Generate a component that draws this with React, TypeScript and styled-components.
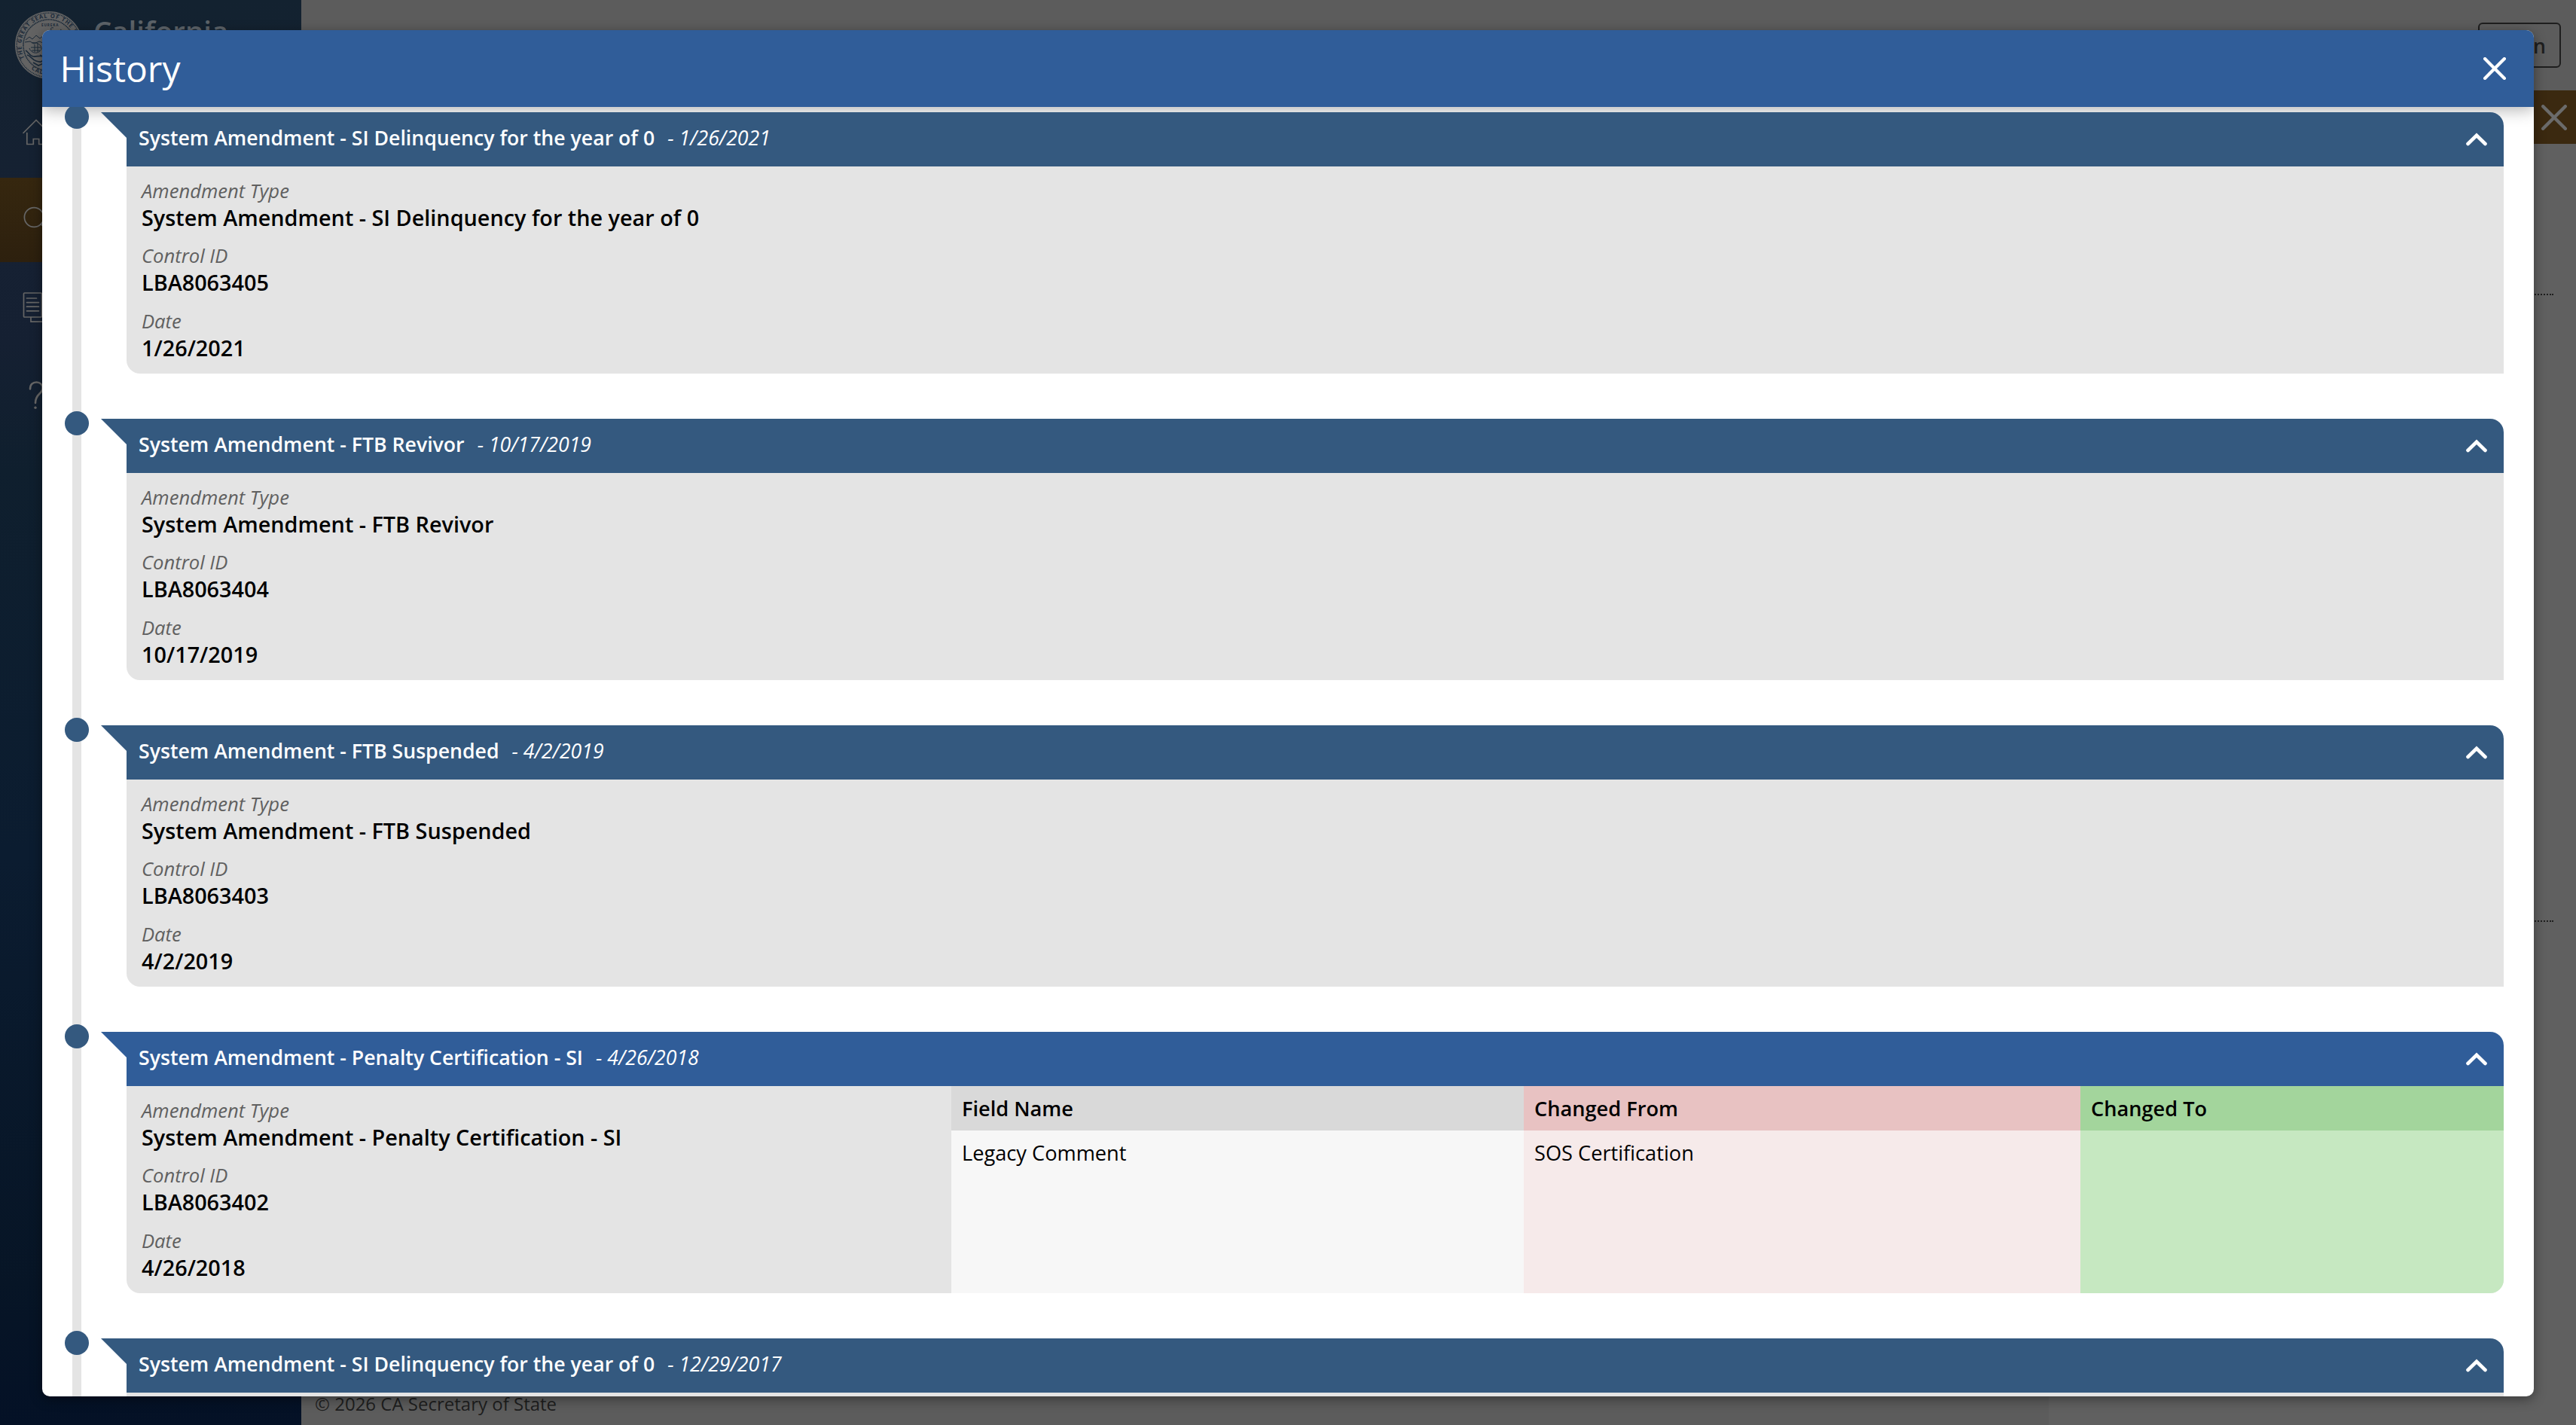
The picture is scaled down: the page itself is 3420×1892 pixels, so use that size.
import React, { FC } from 'react';
import styled, { createGlobalStyle } from 'styled-components';

const GlobalStyle = createGlobalStyle`
  * {
    box-sizing: border-box;
  }

  body {
    margin: 0;
    overflow: hidden;
    font-family: 'Open Sans', 'Noto Sans', sans-serif;
    color: #000;
  }
`;

/* page behind the dialog, colors are already dimmed */

const Page = styled.div`
  display: flex;
  width: 3420px;
  height: 1892px;
  background: #606060;
  overflow: hidden;
`;

const Sidebar = styled.aside`
  flex: none;
  width: 400px;
  background: linear-gradient(180deg, #132230 0%, #162133 17%, #152032 24%, #0f1f2e 33%, #0b1c30 60%, #071526 90%, #041126 100%);
`;

const Brand = styled.div`
  display: flex;
  align-items: flex-start;
  height: 120px;
  padding: 15px 0 0 20px;
`;

const BrandName = styled.div`
  margin-left: 14px;
  font-size: 38.4px;
  font-weight: 600;
  line-height: 52px;
  color: #5c6268;
`;

const Nav = styled.nav`
  display: flex;
  flex-direction: column;
  gap: 4px;
`;

const NavItem = styled.div<{ $active?: boolean }>`
  display: flex;
  align-items: center;
  height: 112px;
  padding-left: 28px;
  color: #666;
  background: ${({ $active }) => $active ? 'linear-gradient(180deg, #36270f, #2d200e)' : 'none'};
`;

const Main = styled.main`
  display: flex;
  flex: 1;
  flex-direction: column;
`;

const TopBar = styled.div`
  display: flex;
  flex: none;
  align-items: center;
  justify-content: flex-end;
  height: 120px;
  padding-right: 20px;
  background: #5c5c5c;
`;

const LoginButton = styled.button`
  width: 110px;
  height: 60px;
  padding: 0;
  border: 2px solid #1e1e1e;
  border-radius: 6px;
  background: none;
  font-family: inherit;
  font-size: 26.67px;
  font-weight: 600;
  color: #1e1e1e;
`;

const Banner = styled.div`
  display: flex;
  flex: none;
  align-items: center;
  justify-content: flex-end;
  height: 71px;
  padding-right: 12px;
  background: #3b2910;
  color: #6b6b6b;
`;

const Content = styled.div`
  flex: 1;
  min-height: 0;
  padding: 199px 30px 0;
`;

const Divider = styled.div`
  border-top: 2px dotted #1e1e1e;

  & + & {
    margin-top: 830px;
  }
`;

const Footer = styled.footer`
  flex: none;
  width: 2320px;
  height: 56px;
  padding-left: 18px;
  background: #5c5c5c;
  font-size: 24px;
  line-height: 56px;
  color: #1e1e1e;
`;

/* dialog */

const Dialog = styled.section`
  position: absolute;
  top: 40px;
  left: 56px;
  display: flex;
  flex-direction: column;
  width: 3308px;
  height: 1814px;
  border-radius: 10px;
  background: #fff;
  box-shadow: 0 4px 16px rgba(0, 0, 0, 0.4);
`;

const DialogClip = styled.div`
  display: flex;
  flex: 1;
  flex-direction: column;
  min-height: 0;
  border-radius: 10px;
  overflow: hidden;
`;

const DialogHeader = styled.header`
  display: flex;
  flex: none;
  align-items: center;
  justify-content: space-between;
  height: 102px;
  padding: 0 37.5px 1px 23.5px;
  background: #305d99;
  box-shadow: 0 4px 20px rgba(0, 0, 0, 0.3);
  color: #fff;
`;

const DialogTitle = styled.h1`
  margin: 0;
  font-size: 48px;
  font-weight: 400;
  line-height: 66px;
`;

const DialogBody = styled.div`
  position: relative;
  flex: 1;
  min-height: 0;
  padding: 7px 40px 0 0;
  overflow: hidden;
`;

const Entry = styled.article`
  display: flex;
  height: 407px;
`;

const Rail = styled.div`
  display: flex;
  flex: none;
  flex-direction: column;
  align-items: center;
  width: 32px;
  margin: 0 50px 0 30px;
`;

const Dot = styled.span`
  position: relative;
  z-index: 1;
  flex: none;
  width: 32px;
  height: 32px;
  margin-top: -10px;
  border-radius: 50%;
  background: #34597f;
`;

const Line = styled.span`
  flex: 1;
  width: 12px;
  margin: -3px 0 -12px;
  background: #e4e4e4;
`;

const Card = styled.div`
  flex: 1;
`;

const CardHeader = styled.div<{ $highlight?: boolean }>`
  position: relative;
  display: flex;
  align-items: center;
  height: 72px;
  padding: 0 22px 0 16px;
  border-top-right-radius: 18px;
  background: ${({ $highlight }) => $highlight ? '#305d99' : '#34597f'};
  color: #fff;

  &::before {
    content: '';
    position: absolute;
    top: 0;
    left: -34px;
    width: 34px;
    height: 34px;
    background: inherit;
    clip-path: polygon(0 0, 100% 0, 100% 100%);
  }
`;

const CardTitle = styled.div`
  flex: 1;
  padding-bottom: 5px;
  font-size: 26.67px;
  font-weight: 600;
  line-height: 36px;
`;

const CardDate = styled.em`
  margin-left: 17px;
  font-weight: 400;
`;

const CardBody = styled.div<{ $rounded: boolean }>`
  display: flex;
  height: 275px;
  border-radius: ${({ $rounded }) => $rounded ? '0 0 18px 18px' : '0 0 0 18px'};
  background: #e4e4e4;
  overflow: hidden;
`;

const Fields = styled.div`
  flex: none;
  width: 1095px;
  padding: 15.6px 20px 0;
`;

const Field = styled.div`
  margin-bottom: 16.5px;
`;

const FieldLabel = styled.div`
  font-size: 25.6px;
  font-style: italic;
  line-height: 34px;
  color: #606060;
`;

const FieldValue = styled.div`
  font-size: 28.8px;
  font-weight: 600;
  line-height: 36px;
`;

const Changes = styled.div`
  display: grid;
  flex: 1;
  grid-template-columns: 760px 739px 1fr;
  grid-template-rows: 59px 1fr;
`;

const Cell = styled.div<{ $color: string; $head?: boolean }>`
  padding-left: 14px;
  background: ${({ $color }) => $color};
  font-size: 27.2px;
  font-weight: ${({ $head }) => $head ? 600 : 400};
  line-height: 59px;
`;

interface CrossProps {
  size: number;
  stroke: number;
}

const Cross: FC<CrossProps> = ({ size, stroke }) => {
  const a = stroke / 2;
  const b = size - a;

  return (
    <svg width={size} height={size} fill='none' stroke='currentColor' strokeWidth={stroke} strokeLinecap='round'>
      <path d={`M${a} ${a}L${b} ${b}M${b} ${a}L${a} ${b}`} />
    </svg>
  );
};

const Chevron: FC = () => (
  <svg width='28' height='18' fill='none' stroke='currentColor' strokeWidth='4.6' strokeLinecap='round'>
    <path d='M2.5 15L14 3.8L25.5 15' />
  </svg>
);

const Seal: FC = () => (
  <svg width='90' height='90' viewBox='0 0 90 90' fill='none' stroke='#1b2a39' strokeWidth='1'>
    <defs>
      <path id='seal-ring' d='M12.5 62A36.6 36.6 0 1 1 77.5 62' />
      <path id='seal-base' d='M19 75A41 41 0 0 0 71 75' />
    </defs>
    <circle cx='45' cy='45' r='45' fill='#636363' stroke='none' />
    <circle cx='45' cy='45' r='42.8' strokeDasharray='1.2 1' strokeWidth='1.4' />
    <circle cx='45' cy='45' r='34' strokeDasharray='1.5 0.7' strokeWidth='1.6' />
    <g fill='#1b2a39' stroke='none' fontSize='7.6' fontWeight='700' letterSpacing='0.9'>
      <text><textPath href='#seal-ring'>THE GREAT SEAL OF THE STATE OF</textPath></text>
      <text><textPath href='#seal-base' startOffset='3'>CALIFORNIA</textPath></text>
      <text x='35' y='20' fontSize='4.6'>EUREKA</text>
    </g>
    <path d='M14 38l5-4 4 3 5-5 5 4 5-4 4 5M13 41l7-1 5 3 7-3 8 3 6-2' />
    <path d='M22 42c4-1 9 0 12 4s-1 8-5 9-9-2-10-6M26 44v10M30 43v11M21 48h13M22 52h11' />
    <path d='M14 52c4 2 5 7 10 8s10-3 14 1M16 58c5 1 6 6 12 8s7 1 10-1M24 68l7 4 7-3M40 40v14M36 46h9M33 58l9 5' strokeWidth='1.7' />
    <path d='M49 26c-3-3-1-5 2-4M46 33c2-3 6-3 8 0M60 24l6 4' />
  </svg>
);

const HomeIcon: FC = () => (
  <svg width='40' height='40' fill='none' stroke='currentColor' strokeWidth='1.7' strokeLinecap='round'>
    <path d='M3 20.5L20 3.5L37 20.5M7.8 20.5V35.5H16.3V28.5H23.7V35.5H32.2V20.5' />
  </svg>
);

const SearchIcon: FC = () => (
  <svg width='40' height='40' fill='none' stroke='currentColor' strokeWidth='1.7' strokeLinecap='round'>
    <circle cx='17.2' cy='16.5' r='12.8' />
    <path d='M26.3 25.5L36.5 35.7' />
  </svg>
);

const DocumentIcon: FC = () => (
  <svg width='40' height='44' fill='none' stroke='currentColor' strokeWidth='1.7' strokeLinecap='round'>
    <rect x='3.5' y='3' width='24' height='32' rx='1' />
    <path d='M13 35.5V41.2H37V9H28M7.5 10H20.5M7.5 15.6H23.5M7.5 21.2H23.5M7.5 26.8H23.5' />
  </svg>
);

const HelpIcon: FC = () => (
  <svg width='40' height='40' fill='none' stroke='currentColor' strokeWidth='2.6' strokeLinecap='round'>
    <path d='M12 12.5C12 6.5 15.5 3.5 20.5 3.5C25.5 3.5 28.5 7 28.5 11.5C28.5 19 19 18.5 19 31' />
    <circle cx='19' cy='37.3' r='1.7' fill='currentColor' stroke='none' />
  </svg>
);

interface Change {
  field: string;
  from: string;
  to: string;
}

interface Amendment {
  type: string;
  controlId: string;
  date: string;
  changes?: Change[];
}

const amendments: Amendment[] = [
  { type: 'System Amendment - SI Delinquency for the year of 0', controlId: 'LBA8063405', date: '1/26/2021' },
  { type: 'System Amendment - FTB Revivor', controlId: 'LBA8063404', date: '10/17/2019' },
  { type: 'System Amendment - FTB Suspended', controlId: 'LBA8063403', date: '4/2/2019' },
  {
    type: 'System Amendment - Penalty Certification - SI',
    controlId: 'LBA8063402',
    date: '4/26/2018',
    changes: [{ field: 'Legacy Comment', from: 'SOS Certification', to: '' }]
  },
  { type: 'System Amendment - SI Delinquency for the year of 0', controlId: '', date: '12/29/2017' }
];

const HistoryEntry: FC<Amendment> = ({ type, controlId, date, changes }) => {
  return (
    <Entry>
      <Rail>
        <Dot />
        <Line />
      </Rail>
      <Card>
        <CardHeader $highlight={!!changes}>
          <CardTitle>
            {type}
            <CardDate>- {date}</CardDate>
          </CardTitle>
          <Chevron />
        </CardHeader>
        <CardBody $rounded={!!changes}>
          {controlId && (
            <Fields>
              <Field>
                <FieldLabel>Amendment Type</FieldLabel>
                <FieldValue>{type}</FieldValue>
              </Field>
              <Field>
                <FieldLabel>Control ID</FieldLabel>
                <FieldValue>{controlId}</FieldValue>
              </Field>
              <Field>
                <FieldLabel>Date</FieldLabel>
                <FieldValue>{date}</FieldValue>
              </Field>
            </Fields>
          )}
          {changes && (
            <Changes>
              <Cell $head $color='#d9d9d9'>Field Name</Cell>
              <Cell $head $color='#e8c2c2'>Changed From</Cell>
              <Cell $head $color='#a3d59c'>Changed To</Cell>
              {changes.map(({ field, from, to }) => (
                <React.Fragment key={field}>
                  <Cell $color='#f7f7f7'>{field}</Cell>
                  <Cell $color='#f6eaea'>{from}</Cell>
                  <Cell $color='#c6e8c1'>{to}</Cell>
                </React.Fragment>
              ))}
            </Changes>
          )}
        </CardBody>
      </Card>
    </Entry>
  );
};

const App: FC = () => {
  return (
    <>
      <GlobalStyle />
      <Page>
        <Sidebar>
          <Brand>
            <Seal />
            <BrandName>California</BrandName>
          </Brand>
          <Nav>
            <NavItem><HomeIcon /></NavItem>
            <NavItem $active><SearchIcon /></NavItem>
            <NavItem><DocumentIcon /></NavItem>
            <NavItem><HelpIcon /></NavItem>
          </Nav>
        </Sidebar>
        <Main>
          <TopBar>
            <LoginButton>Login</LoginButton>
          </TopBar>
          <Banner>
            <Cross size={34} stroke={4.4} />
          </Banner>
          <Content>
            <Divider />
            <Divider />
          </Content>
          <Footer>© 2026 CA Secretary of State</Footer>
        </Main>
      </Page>
      <Dialog>
        <DialogClip>
          <DialogHeader>
            <DialogTitle>History</DialogTitle>
            <Cross size={30} stroke={4.2} />
          </DialogHeader>
          <DialogBody>
            {amendments.map((item, index) => <HistoryEntry key={index} {...item} />)}
          </DialogBody>
        </DialogClip>
      </Dialog>
    </>
  );
};

export default App;
